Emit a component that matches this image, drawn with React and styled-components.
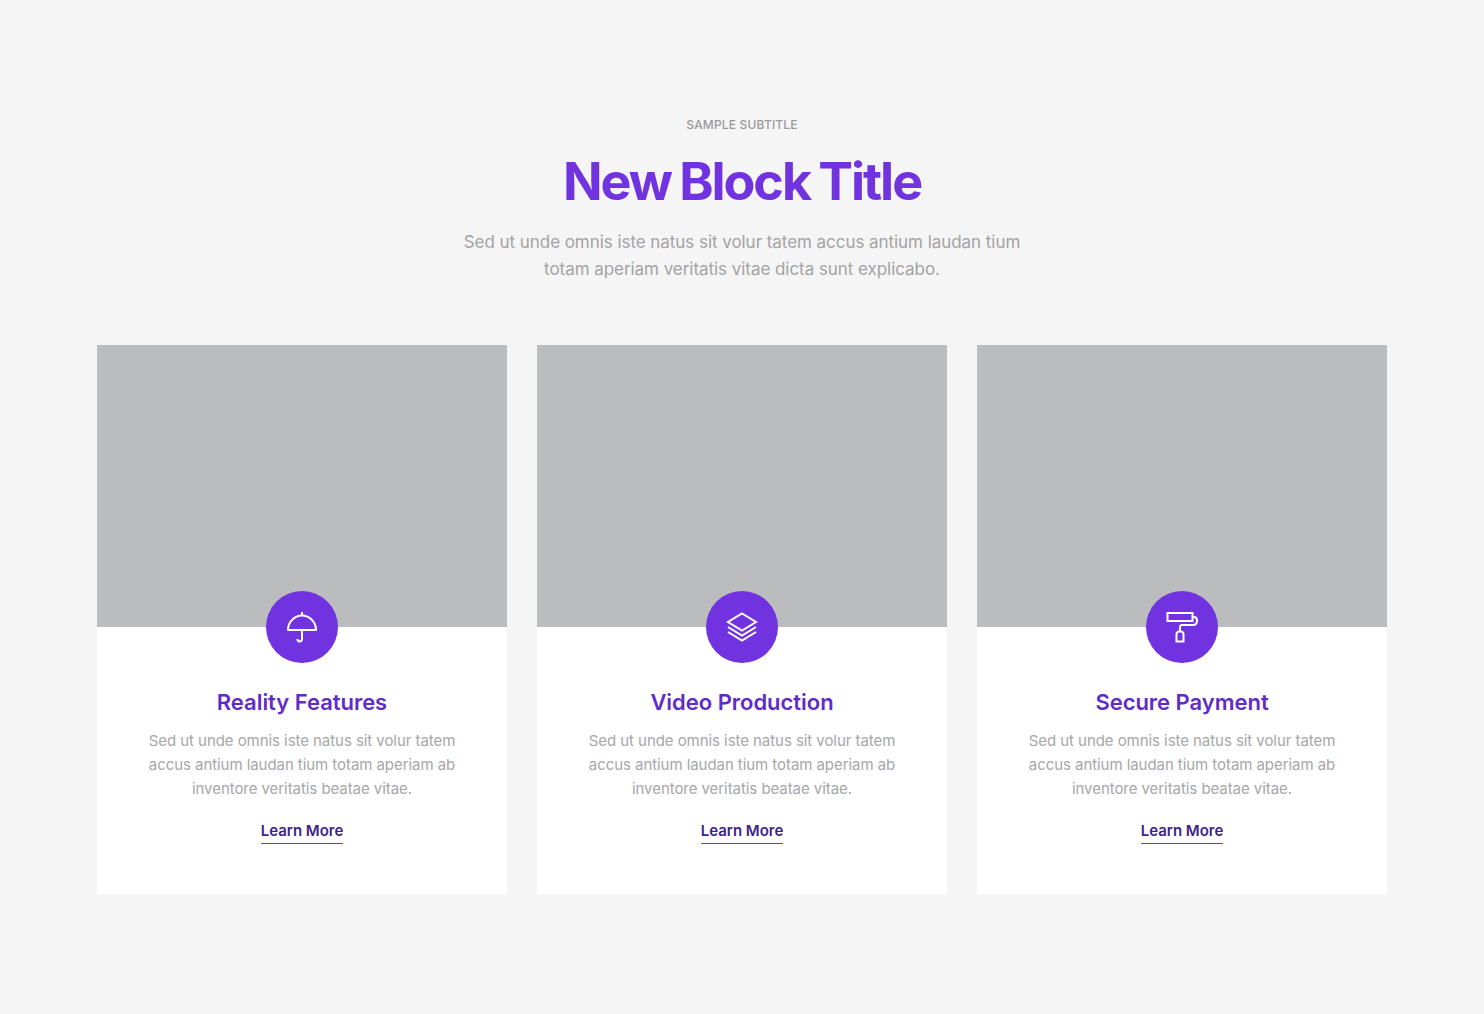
import styled, { createGlobalStyle } from 'styled-components';

const GlobalStyle = createGlobalStyle`
  html, body {
    margin: 0;
    padding: 0;
    background: #f5f5f5;
  }
  body {
    font-family: "Inter", "Open Sans", sans-serif;
    -webkit-font-smoothing: auto;
  }
`;

const cards = [
  { id: 1, name: 'Reality Features', icon: 'umbrella' },
  { id: 2, name: 'Video Production', icon: 'layers' },
  { id: 3, name: 'Secure Payment', icon: 'roller' },
];

const UmbrellaIcon = () => (
  <svg width="32" height="32" viewBox="0 0 32 32" fill="none" stroke="#fff" strokeWidth="2">
    <path d="M16 1v3.500" />
    <path d="M2 19C2 11 8.500 4.500 16 4.500S30 11 30 19z" strokeLinejoin="round" />
    <path d="M16 19v9c0 3.200-4.600 3.200-4.600 0" />
  </svg>
);

const LayersIcon = () => (
  <svg width="32" height="32" viewBox="0 0 32 32" fill="none" stroke="#fff" strokeWidth="2" strokeLinejoin="miter">
    <path d="M16 2.500 30 11 16 19.500 2 11z" />
    <path d="M2 16 16 24.500 30 16" />
    <path d="M2 21 16 29.500 30 21" />
  </svg>
);

const RollerIcon = () => (
  <svg width="32" height="32" viewBox="0 0 32 32" fill="none" stroke="#fff" strokeWidth="2">
    <rect x="1.500" y="2" width="25" height="8" />
    <path d="M27 6h1c2 0 3 1.500 3 3.500 0 3-1.500 4.500-4 4.500H16c-1.200 0-2 .8-2 2v4.500" />
    <path d="M10.500 30.500V23c0-1.200 1.300-2.500 2.500-2.500h2c1.200 0 2.500 1.300 2.500 2.500v7.500z" />
  </svg>
);

const icons = {
  umbrella: UmbrellaIcon,
  layers: LayersIcon,
  roller: RollerIcon,
};

const Card = ({ name, icon }) => {
  const Icon = icons[icon];
  return (
    <CardWrap>
      <CardImage>
        <IconBadge>
          <Icon />
        </IconBadge>
      </CardImage>
      <CardBody>
        <CardTitle>{name}</CardTitle>
        <CardText>
          Sed ut unde omnis iste natus sit volur tatem
          <br />
          accus antium laudan tium totam aperiam ab
          <br />
          inventore veritatis beatae vitae.
        </CardText>
        <LearnMore href="#">Learn More</LearnMore>
      </CardBody>
    </CardWrap>
  );
};

export default function App() {
  return (
    <Page>
      <GlobalStyle />
      <Header>
        <Subtitle>SAMPLE SUBTITLE</Subtitle>
        <Title>New Block Title</Title>
        <Intro>
          Sed ut unde omnis iste natus sit volur tatem accus antium laudan tium
          <br />
          totam aperiam veritatis vitae dicta sunt explicabo.
        </Intro>
      </Header>
      <CardsGrid>
        {cards.map(card => (
          <Card key={card.id} name={card.name} icon={card.icon} />
        ))}
      </CardsGrid>
    </Page>
  );
}

const Page = styled.main`
  min-height: 1014px;
  box-sizing: border-box;
  padding: 116px 97px 120px;
  background: #f5f5f5;
`;

const Header = styled.header`
  text-align: center;
  margin-bottom: 62px;
`;

const Subtitle = styled.div`
  font-size: 12px;
  line-height: 18px;
  font-weight: 500;
  color: #9a9a9e;
  letter-spacing: 0.17px;
`;

const Title = styled.h2`
  margin: 18px 0 0;
  font-size: 52px;
  line-height: 60px;
  font-weight: 700;
  color: #7133df;
  letter-spacing: -2.05px;
  word-spacing: -2px;
`;

const Intro = styled.p`
  margin: 17px 0 0;
  font-size: 17px;
  line-height: 27px;
  font-weight: 400;
  color: #a3a3a6;
  letter-spacing: -0.05px;
`;

const CardsGrid = styled.div`
  display: grid;
  grid-template-columns: repeat(3, 410px);
  gap: 30px;
`;

const CardWrap = styled.article`
  background: #fff;
  height: 549px;
`;

const CardImage = styled.div`
  position: relative;
  height: 282px;
  background: #bbbcbe;
`;

const IconBadge = styled.div`
  position: absolute;
  left: 50%;
  bottom: -36px;
  width: 72px;
  height: 72px;
  margin-left: -36px;
  border-radius: 50%;
  background: #7133df;
  display: flex;
  align-items: center;
  justify-content: center;
`;

const CardBody = styled.div`
  padding: 62px 20px 0;
  text-align: center;
`;

const CardTitle = styled.h3`
  margin: 0;
  font-size: 22px;
  line-height: 26px;
  font-weight: 600;
  color: #5f2cc9;
  letter-spacing: -0.03px;
`;

const CardText = styled.p`
  margin: 14px 0 0;
  font-size: 15px;
  line-height: 24px;
  color: #a6a6a9;
  letter-spacing: -0.06px;
`;

const LearnMore = styled.a`
  display: inline-block;
  margin-top: 20px;
  padding-bottom: 2px;
  font-size: 15px;
  line-height: 20px;
  font-weight: 600;
  color: #3d1f8f;
  letter-spacing: 0;
  text-decoration: none;
  border-bottom: 1px solid #7133df;
`;
